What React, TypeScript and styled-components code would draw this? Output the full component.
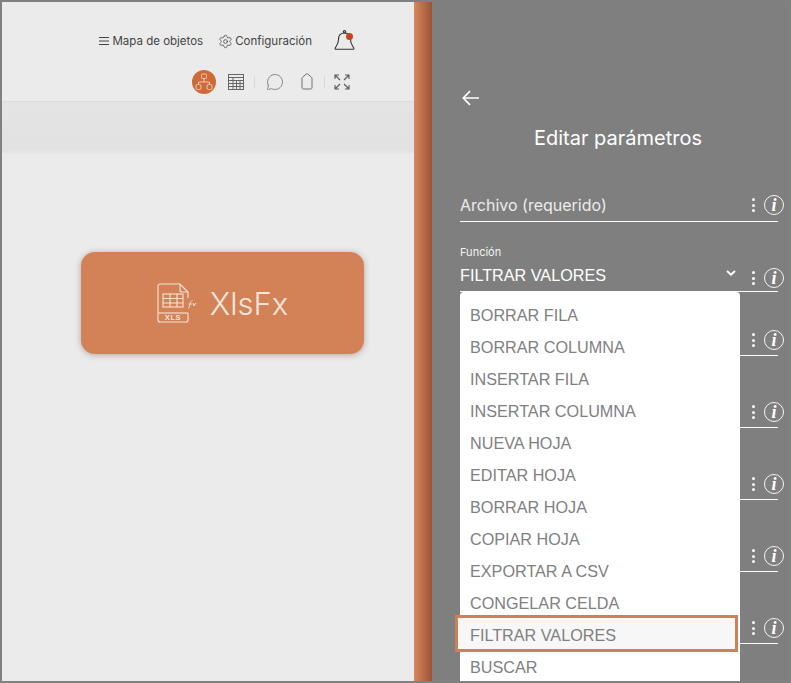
import { Settings, MessageCircle } from "lucide-react";
import styled, { createGlobalStyle } from "styled-components";

const options = [
    "BORRAR FILA",
    "BORRAR COLUMNA",
    "INSERTAR FILA",
    "INSERTAR COLUMNA",
    "NUEVA HOJA",
    "EDITAR HOJA",
    "BORRAR HOJA",
    "COPIAR HOJA",
    "EXPORTAR A CSV",
    "CONGELAR CELDA",
    "FILTRAR VALORES",
    "BUSCAR",
];

const RowActions = ({ lift = 5 }: { lift?: number }) => (
    <Actions $lift={lift}>
        <Kebab>
            <i />
            <i />
            <i />
        </Kebab>
        <Info>i</Info>
    </Actions>
);

const MenuIcon = () => (
    <svg width="10" height="8" viewBox="0 0 10 8" fill="none" stroke="#444" strokeWidth="1">
        <path d="M0 0.5H10M0 4H10M0 7.500H10" />
    </svg>
);

const BellIcon = () => (
    <svg width="21" height="20" viewBox="0 0 21 20" fill="none" stroke="#333" strokeWidth="1.100">
        <circle cx="10.500" cy="1.800" r="1.200" />
        <path d="M10.500 3C6 3 4.500 6 4.500 9.500C4.500 13.500 3 15 1.300 17.800C0.800 18.700 1.200 19.300 2 19.300H19C19.800 19.300 20.200 18.700 19.700 17.800C18 15 16.500 13.500 16.500 9.500C16.500 6 15 3 10.500 3Z" />
    </svg>
);

const NetworkIcon = () => (
    <svg width="18" height="18" viewBox="0 0 18 18" fill="none" stroke="#f3c9ae" strokeWidth="1">
        <rect x="6.500" y="1" width="5" height="4.500" rx="0.800" />
        <rect x="1" y="11.500" width="5" height="5" rx="1.500" />
        <rect x="12" y="11.500" width="5" height="5" rx="1.500" />
        <path d="M9 5.500V9M3.500 11.500V9H14.500V11.500" />
    </svg>
);

const TableIcon = () => (
    <svg width="16" height="16" viewBox="0 0 16 16" fill="none" stroke="#666" strokeWidth="1">
        <rect x="0.500" y="0.500" width="15" height="15" />
        <path d="M0.500 3.500H15.500M5 3.500V15.500M0.500 6.500H15.500M0.500 9.500H15.500M0.500 12.500H15.500M8.500 6.500V15.500M12 6.500V15.500" />
    </svg>
);

const TagIcon = () => (
    <svg width="12" height="17" viewBox="0 0 12 17" fill="none" stroke="#707070" strokeWidth="1">
        <path d="M1 5.500C1 4.800 1.300 4.500 1.800 4L5 1.200C5.600 0.700 6.400 0.700 7 1.200L10.200 4C10.700 4.500 11 4.800 11 5.500V14.500C11 15.500 10.500 16 9.500 16H2.500C1.500 16 1 15.500 1 14.500Z" />
    </svg>
);

const ExpandIcon = () => (
    <svg width="16" height="16" viewBox="0 0 16 16" fill="none" stroke="#5a5a5a" strokeWidth="1.100">
        <path d="M1 5V1H5M1 1L6 6M15 5V1H11M15 1L10 6M1 11V15H5M1 15L6 10M15 11V15H11M15 15L10 10" />
    </svg>
);

const BackIcon = () => (
    <svg width="18" height="16" viewBox="0 0 18 16" fill="none" stroke="#fff" strokeWidth="1.700">
        <path d="M17 8H1.500M8 1.200L1.300 8L8 14.800" />
    </svg>
);

const CaretIcon = () => (
    <svg width="10" height="6" viewBox="0 0 10 6" fill="none" stroke="#fff" strokeWidth="1.800">
        <path d="M1 1L5 4.700L9 1" />
    </svg>
);

const XlsIcon = () => (
    <svg width="40" height="40" viewBox="0 0 40 40" fill="none" stroke="#f6e3d6" strokeWidth="1.100">
        <path d="M31 30V37C31 38 30 39 29 39H3C2 39 1 38 1 37V3C1 2 2 1 3 1H23L31 9V15" />
        <path d="M23 1V7C23 8.500 24 9 25 9H31" />
        <path d="M1 30H31" />
        <rect x="6" y="11" width="20" height="13" />
        <path d="M6 15.500H26M6 20H26M13 11V24M20 11V24" />
        <path d="M31.500 25.500C33.500 22 33 18 35.500 17.500M31.500 21H35M36 20L37 23L39 20" strokeWidth="0.900" />
        <text x="16" y="36.700" textAnchor="middle" fontFamily="'Liberation Sans', sans-serif" fontSize="7.500" fontWeight="700" letterSpacing="0.600" fill="#f6e3d6" stroke="none">
            XLS
        </text>
    </svg>
);

export default function App() {
    return (
        <>
            <GlobalStyle />
            <Frame>
                <Workspace>
                    <TopNav>
                        <NavLink $gap={3}>
                            <MenuIcon />
                            Mapa de objetos
                        </NavLink>
                        <NavLink $gap={2}>
                            <Settings size={15} strokeWidth={1.2} />
                            Configuración
                        </NavLink>
                        <BellBox>
                            <BellIcon />
                            <BellDot />
                        </BellBox>
                    </TopNav>
                    <ToolRow>
                        <ActiveTool>
                            <NetworkIcon />
                        </ActiveTool>
                        <Tool $width={16}>
                            <TableIcon />
                        </Tool>
                        <ToolDivider $left={10} $right={11} />
                        <Tool $width={18}>
                            <MessageCircle size={18} strokeWidth={1} color="#666" />
                        </Tool>
                        <Tool $width={12} $gap={17}>
                            <TagIcon />
                        </Tool>
                        <ToolDivider $left={11} $right={9} />
                        <Tool $width={16}>
                            <ExpandIcon />
                        </Tool>
                    </ToolRow>
                    <Band />
                    <Canvas>
                        <ObjectCard>
                            <XlsIcon />
                            <CardTitle>XlsFx</CardTitle>
                        </ObjectCard>
                    </Canvas>
                </Workspace>
                <Strip />
                <Panel>
                    <BackButton>
                        <BackIcon />
                    </BackButton>
                    <PanelTitle>Editar parámetros</PanelTitle>
                    <Field $height={72}>
                        <FieldMain>
                            <FieldText>Archivo (requerido)</FieldText>
                        </FieldMain>
                        <RowActions lift={6} />
                    </Field>
                    <FunctionField>
                        <FieldMain>
                            <SmallLabel>Función</SmallLabel>
                            <ValueRow>
                                <FieldValue>FILTRAR VALORES</FieldValue>
                                <CaretHolder>
                                    <CaretIcon />
                                </CaretHolder>
                            </ValueRow>
                        </FieldMain>
                        <RowActions lift={3} />
                        <Dropdown>
                            {options.map((option) => (
                                <Option key={option} $active={option === "FILTRAR VALORES"}>
                                    {option}
                                </Option>
                            ))}
                        </Dropdown>
                    </FunctionField>
                    {[64, 72, 72, 72, 72].map((height, n) => (
                        <Field key={n} $height={height}>
                            <FieldMain />
                            <RowActions />
                        </Field>
                    ))}
                </Panel>
            </Frame>
        </>
    );
}

const GlobalStyle = createGlobalStyle`
    html, body {
        margin: 0;
        padding: 0;
        overflow: hidden;
    }
    * {
        box-sizing: border-box;
    }
`;

const Frame = styled.div`
    display: flex;
    width: 791px;
    height: 683px;
    border: 2px solid #808080;
    overflow: hidden;
    font-family: "Inter", "Noto Sans", sans-serif;
`;

const Workspace = styled.div`
    display: flex;
    flex-direction: column;
    width: 412px;
    flex: none;
    background-color: #ebebeb;
`;

const TopNav = styled.div`
    display: flex;
    justify-content: flex-end;
    align-items: center;
    height: 60px;
    padding: 18px 60px 0 0;
`;

const NavLink = styled.a<{ $gap: number }>`
    display: flex;
    align-items: center;
    gap: ${(p) => p.$gap}px;
    margin-right: 15px;
    color: #444;
    font-size: 11.5px;
    white-space: nowrap;
`;

const BellBox = styled.div`
    position: relative;
    display: flex;
    margin: -2px -1px 0 7px;
`;

const BellDot = styled.span`
    position: absolute;
    top: 2.5px;
    right: 2px;
    width: 7px;
    height: 7px;
    border-radius: 50%;
    background-color: #c4451d;
`;

const ToolRow = styled.div`
    display: flex;
    justify-content: flex-end;
    align-items: center;
    height: 40px;
    padding: 0 64px 0 0;
    border-bottom: 1px solid #dcdcdc;
`;

const ActiveTool = styled.div`
    display: flex;
    justify-content: center;
    align-items: center;
    width: 24px;
    height: 24px;
    margin-right: 12px;
    border-radius: 50%;
    background-color: #cd6a38;
`;

const Tool = styled.div<{ $width: number; $gap?: number }>`
    display: flex;
    justify-content: center;
    width: ${(p) => p.$width}px;
    margin-left: ${(p) => p.$gap ?? 0}px;
`;

const ToolDivider = styled.span<{ $left: number; $right: number }>`
    width: 1px;
    height: 12px;
    margin: 0 ${(p) => p.$right}px 0 ${(p) => p.$left}px;
    background-color: #d8d8d8;
`;

const Band = styled.div`
    height: 52px;
    background: linear-gradient(#e4e4e4, #e2e2e2 92%, #e8e8e8);
`;

const Canvas = styled.div`
    flex: 1;
    padding: 98px 0 0 79px;
`;

const ObjectCard = styled.div`
    display: flex;
    justify-content: center;
    align-items: center;
    gap: 13px;
    width: 283px;
    height: 102px;
    border-radius: 14px;
    background-color: #d38257;
    box-shadow: 0 1px 6px rgba(90, 70, 60, 0.4);
`;

const CardTitle = styled.span`
    color: #f6e6dc;
    font-size: 31px;
    font-weight: 300;
`;

const Strip = styled.div`
    width: 18px;
    flex: none;
    background: linear-gradient(90deg, #d9875a, #9d5237);
`;

const Panel = styled.div`
    position: relative;
    flex: 1;
    padding: 88px 11px 0 28px;
    background-color: #7f7f7f;
`;

const BackButton = styled.div`
    display: flex;
    height: 17px;
    margin-left: 2px;
`;

const PanelTitle = styled.h2`
    margin: 19px 0 0 0;
    padding-right: 2px;
    color: #fff;
    font-size: 20px;
    font-weight: 400;
    line-height: 24px;
    text-align: center;
`;

const Field = styled.div<{ $height: number }>`
    display: flex;
    align-items: flex-end;
    height: ${(p) => p.$height}px;
    border-bottom: 1px solid #fff;
`;

const FunctionField = styled(Field).attrs({ $height: 70 })`
    position: relative;
`;

const FieldMain = styled.div`
    flex: 1;
    min-width: 0;
    padding-right: 6px;
`;

const FieldText = styled.div`
    padding-bottom: 5px;
    color: #ececec;
    font-size: 16px;
    line-height: 22px;
`;

const SmallLabel = styled.div`
    margin-bottom: 1px;
    color: #f2f2f2;
    font-size: 11px;
    line-height: 14px;
`;

const ValueRow = styled.div`
    display: flex;
    justify-content: space-between;
    align-items: flex-start;
    height: 31px;
    padding-top: 6px;
`;

const FieldValue = styled.span`
    color: #fff;
    font-family: "Liberation Sans", Arial, sans-serif;
    font-size: 16.200px;
    line-height: 18px;
`;

const CaretHolder = styled.span`
    display: flex;
    padding-top: 4px;
    margin-right: 10px;
`;

const Actions = styled.div<{ $lift: number }>`
    display: flex;
    align-items: center;
    gap: 9px;
    flex: none;
    margin: 0 -6px ${(p) => p.$lift}px 0;
`;

const Kebab = styled.span`
    display: flex;
    flex-direction: column;
    gap: 2.5px;
    i {
        width: 3px;
        height: 3px;
        border-radius: 50%;
        background-color: #fff;
    }
`;

const Info = styled.span`
    display: flex;
    justify-content: center;
    align-items: center;
    width: 20px;
    height: 20px;
    border: 1.5px solid #f4f4f4;
    border-radius: 50%;
    color: #fff;
    font-family: "Liberation Serif", serif;
    font-size: 18px;
    font-style: italic;
    font-weight: 700;
    line-height: 1;
`;

const Dropdown = styled.ul`
    position: absolute;
    top: 70px;
    left: 0;
    z-index: 2;
    width: 280px;
    margin: 0;
    padding: 8px 0 0;
    list-style: none;
    border-radius: 4px 4px 0 0;
    background-color: #fff;
`;

const Option = styled.li<{ $active?: boolean }>`
    height: 32px;
    padding-left: 10px;
    color: #808080;
    font-family: "Liberation Sans", Arial, sans-serif;
    font-size: 16.200px;
    line-height: 30px;
    ${(p) =>
        p.$active &&
        `
        position: relative;
        width: 283px;
        height: 37px;
        margin: -5px 0 0 -5px;
        padding-left: 12px;
        line-height: 34px;
        border: 3px solid #d08056;
        background-color: #f7f7f7;
    `}
`;
